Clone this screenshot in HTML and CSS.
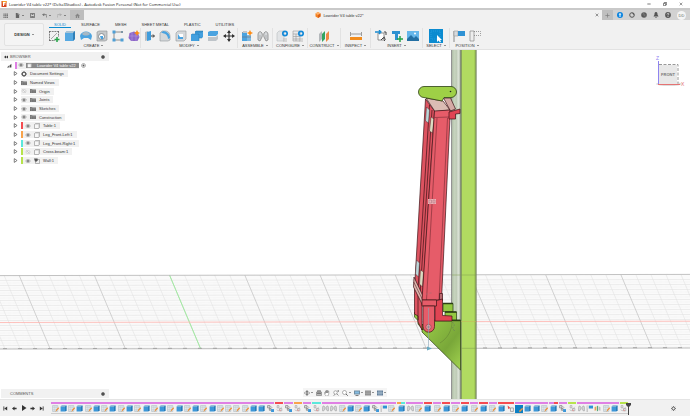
FILE: index.html
```html
<!DOCTYPE html>
<html lang="en">
  <head>
    <meta charset="utf-8">
    <meta name="viewport" content="width=device-width, initial-scale=1">
    <title>Lowrider V4 table v22* (Delta3Studios) - Autodesk Fusion Personal</title>
    <link rel="stylesheet" href="styles.css">
  </head>
  <body>
    <!-- icon sheet -->
    <svg class="sheet" aria-hidden="true">
      <symbol id="app" viewBox="0 0 12 12"><path d="M1 0h10v12H1z" fill="#d8431b"/><path d="M3 0h8v3L8 5H3z" fill="#f7a52b"/><path d="M4 2h5v2H6v1h3v2H6v3H4z" fill="#fff"/></symbol>
      <symbol id="apps" viewBox="0 0 12 12"><path d="M1 1h3v3H1zM5 1h3v3H5zM9 1h3v3H9zM1 5h3v3H1zM5 5h3v3H5zM9 5h3v3H9zM1 9h3v3H1zM5 9h3v3H5zM9 9h3v3H9z" fill="#777"/></symbol>
      <symbol id="file" viewBox="0 0 12 12"><path d="M2 0h5l3 3v9H2z" fill="#666"/><path d="M7 0v3h3" stroke="#ddd" fill="none"/></symbol>
      <symbol id="save" viewBox="0 0 12 12"><path d="M1 1h10v10H1z" fill="none" stroke="#666" stroke-width="2"/><path d="M4 1h4v4H4zM3 7h6v4H3z" fill="#777"/></symbol>
      <symbol id="undo" viewBox="0 0 12 12"><path d="M2 4h6a3 3 0 0 1 2 6M5 1L2 4l3 3" fill="none" stroke="#555" stroke-width="1.8"/></symbol>
      <symbol id="redo" viewBox="0 0 12 12"><path d="M10 4H4a3 3 0 0 0-2 6M7 1l3 3-3 3" fill="none" stroke="#999" stroke-width="1.5"/></symbol>
      <symbol id="home" viewBox="0 0 12 12"><path d="M6 1l6 6h-2v5H7V8H5v4H2V7H0z" fill="#858585"/></symbol>
      <symbol id="cube" viewBox="0 0 12 12"><path d="M6 0l5 3v6l-5 3-5-3V3z" fill="#f58220"/><path d="M6 0l5 3-5 3-5-3z" fill="#ffb168"/><path d="M6 6l5-3v6l-5 3z" fill="#d9601a"/></symbol>
      <symbol id="close" viewBox="0 0 12 12"><path d="M2 2l8 8M10 2l-8 8" stroke="#444" stroke-width="1.6"/></symbol>
      <symbol id="min" viewBox="0 0 12 12"><path d="M1 6h10" stroke="#222" stroke-width="1.8"/></symbol>
      <symbol id="restore" viewBox="0 0 12 12"><path d="M1.500 4h6.500v7H1.500zM4 4V1.500h7V8H8" fill="none" stroke="#222" stroke-width="1.6"/></symbol>
      <symbol id="plus" viewBox="0 0 12 12"><path d="M6 1v10M1 6h10" stroke="#777" stroke-width="1.5"/></symbol>
      <symbol id="ext-icon" viewBox="0 0 12 12"><circle cx="6" cy="6" r="6" fill="#0a84e0"/><path d="M6 2l3 3H7v5H5V5H3z" fill="#fff"/></symbol>
      <symbol id="jobs" viewBox="0 0 12 12"><circle cx="6" cy="6" r="4.600" fill="none" stroke="#555" stroke-width="2"/><path d="M6 3l4-1v4z" fill="#555"/></symbol>
      <symbol id="online" viewBox="0 0 12 12"><circle cx="6" cy="6" r="5.600" fill="#5a5a5a"/><path d="M3 4l6 5M4 2l5 4" stroke="#999"/></symbol>
      <symbol id="bell" viewBox="0 0 12 12"><path d="M6 0c3 0 3 3 3 5l2 4H1l2-4c0-2 0-5 3-5zM4 10h4l-2 2z" fill="#555"/></symbol>
      <symbol id="help" viewBox="0 0 12 12"><circle cx="6" cy="6" r="5.800" fill="#555"/><path d="M4 5c0-3 4-3 4-1 0 1.500-2 1.500-2 3M6 8v2" stroke="#fff" stroke-width="1.300" fill="none"/></symbol>

      <symbol id="sketch" viewBox="0 0 12 12"><path d="M1 1.500h10M1.500 1v10M1 10.500h6M10.500 1v6" fill="none" stroke="#666" stroke-width=".8" stroke-dasharray="2 .7"/><path d="M3 9l6-6" stroke="#888" stroke-width=".7"/><path d="M9 7v5M6.500 9.500h5" stroke="#25a347" stroke-width="1.500"/></symbol>
      <symbol id="extrude" viewBox="0 0 12 12"><path d="M1 3l2-2h8v8l-2 2H1z" fill="#56a9e2"/><path d="M1 3l2-2h8L9 3z" fill="#a9c4d6"/><path d="M9 3l2-2v8l-2 2z" fill="#2f7fb8"/></symbol>
      <symbol id="revolve" viewBox="0 0 12 12"><path d="M0 6c1-6 11-6 12 0l-1 4-3-2H4l-3 2z" fill="#4aa3e0"/><path d="M2 4c2-3 6-3 8 0-2 2-6 2-8 0z" fill="#a6b8c4"/></symbol>
      <symbol id="hole" viewBox="0 0 12 12"><path d="M1 2l2-1h8v9l-2 1H1z" fill="#c6c9cb" stroke="#8b8f92" stroke-width=".6"/><circle cx="5.500" cy="6.500" r="3" fill="#fff" stroke="#858b90"/><path d="M4 6h3v3H5z" fill="#4aa3e0"/></symbol>
      <symbol id="pattern" viewBox="0 0 12 12"><path d="M2 2h8M2 2v8h8" fill="none" stroke="#777" stroke-width=".8"/><path d="M.5.500h3v3h-3zM.5 8.500h3v3h-3zM8.500 8.500h3v3h-3z" fill="#4f9fd6"/><path d="M9 1h2v2H9z" fill="#7d96a5"/></symbol>
      <symbol id="form" viewBox="0 0 12 12"><path d="M6 1.500l4 1.500 1.500 4-2 4H3L.5 8l1-5z" fill="#8d67c8"/><path d="M1 6h10M4 2v9M8 3v8" stroke="#b498e0" stroke-width=".6"/><path d="M9 0l1 2 2 1-2 1-1 2-1-2-2-1 2-1z" fill="#ff8b13"/></symbol>
      <symbol id="presspull" viewBox="0 0 12 12"><path d="M2 2l3-1v9l-3 1z" fill="#b8bcc0"/><path d="M4 2l4-1v9l-4 1z" fill="#3f9cdc"/><path d="M8 6h3M10 4.500L11.500 6 10 7.500" stroke="#333" fill="none"/></symbol>
      <symbol id="fillet" viewBox="0 0 12 12"><path d="M1 3l2-2h3c4 0 5 3 5 6v3l-2 1H1z" fill="#d5d8da" stroke="#92979b" stroke-width=".6"/><path d="M4 1c4 0 7 3 7 7L9 9C9 5 6 3 2 3z" fill="#4aa3e0"/></symbol>
      <symbol id="shell" viewBox="0 0 12 12"><path d="M1 3l2-2h8v8l-2 2H1z" fill="#d5d8da" stroke="#92979b" stroke-width=".6"/><path d="M3 4h5v5H3z" fill="#fff"/><path d="M3 4l2 3h3v2H3z" fill="#4aa3e0"/></symbol>
      <symbol id="combine" viewBox="0 0 12 12"><path d="M4 2l1-1h7v6l-1 1H8v3H0V5l1-1h3z" fill="#43a0df"/><path d="M4 2l1-1h7l-1 1zM0 5l1-1h7v4h3M8 8v3" fill="none" stroke="#2375aa" stroke-width=".5"/></symbol>
      <symbol id="split" viewBox="0 0 12 12"><path d="M1 2l2-1h8v3L9 6H1z" fill="#4aa3e0"/><path d="M1 7h8l2-2v4l-2 2H1z" fill="#bec4c9"/></symbol>
      <symbol id="move" viewBox="0 0 12 12"><path d="M6 1v10M1 6h10" stroke="#333" stroke-width="1.200"/><path d="M6 0l2 3H4zM6 12l2-3H4zM0 6l3-2v4zM12 6L9 4v4z" fill="#333"/></symbol>
      <symbol id="component" viewBox="0 0 12 12"><path d="M1 3h5v8H1z" fill="#4aa3e0"/><path d="M6 5h4v6H6z" fill="#7db8e0"/><path d="M1 7h9M1 3l1-1h4" stroke="#678" stroke-width=".7" fill="none"/><path d="M9 0l1 2 2 1-2 1-1 2-1-2-2-1 2-1z" fill="#ff8b13"/></symbol>
      <symbol id="joint" viewBox="0 0 12 12"><path d="M1 10V5c0-3 2-4 3-3 1.500 1 1.500 3 1 5l-2 4zM7 7c-.5-2-.5-4 1-5 1-1 3 0 3 3v5l-2 1z" fill="#d5d8da" stroke="#777" stroke-width=".7"/><path d="M3 5v4M9 5v4" stroke="#999" stroke-width=".6"/></symbol>
      <symbol id="config" viewBox="0 0 12 12"><path d="M1 3l2-2h5v10H1z" fill="#e2e4e6" stroke="#b9bdc0" stroke-width=".6"/><circle cx="9" cy="3.500" r="2.200" fill="none" stroke="#1489d8" stroke-width="1.700"/><path d="M7 9h4M7 11h4" stroke="#bbb"/></symbol>
      <symbol id="table" viewBox="0 0 12 12"><path d="M1 1h7v10H1zM1 4h7M1 6.500h7M1 9h7M4 4v7" fill="#e9eaeb" stroke="#999" stroke-width=".6"/><circle cx="9" cy="3.500" r="2.200" fill="none" stroke="#1489d8" stroke-width="1.700"/><path d="M7 9h4M7 11h4" stroke="#bbb"/></symbol>
      <symbol id="plane" viewBox="0 0 12 12"><path d="M1 4l3-3v8l-3 3z" fill="#b4b8bb"/><path d="M4 4l3-3v8l-3 3z" fill="#32a562"/><path d="M8 4l3-3v8l-3 3z" fill="#ef8a45"/></symbol>
      <symbol id="measure" viewBox="0 0 12 12"><path d="M.5 2v4M11.500 2v4M1 4h10" stroke="#777" stroke-width=".7"/><path d="M0 7h12v3H0z" fill="#f28c1d"/></symbol>
      <symbol id="derive" viewBox="0 0 12 12"><path d="M3 3h6v7H3z" fill="#fff" stroke="#777" stroke-width=".8"/><path d="M0 2h5M4 0l2 2-2 2" stroke="#188ad0" stroke-width="1.300" fill="none"/><path d="M9 2h2v3M6 10l2-2a1.500 1.500 0 0 1 2 2l-1 1M8 8l2-1" stroke="#444" fill="none"/></symbol>
      <symbol id="mcmaster" viewBox="0 0 12 12"><path d="M1 1h8v3H7v6H4V4H1z" fill="#2e91d1"/><path d="M9 6v6M6 9h6" stroke="#25a347" stroke-width="1.500"/></symbol>
      <symbol id="picture" viewBox="0 0 12 12"><path d="M0 1h12v10H0z" fill="#65b6ea"/><circle cx="8" cy="3.500" r="1" fill="#fff"/><path d="M0 9l4-4 3 3 2-2 3 3v2H0z" fill="#236fa3"/></symbol>
      <symbol id="select" viewBox="0 0 14 14"><path d="M0 0h14v14H0z" fill="#0b8bd0"/><path d="M2 2h9v8H2z" fill="none" stroke="#38a9e5" stroke-width=".6" stroke-dasharray="1 1"/><path d="M8 6v7l1.500-1.500L11 13.500l1-1L11 11h2z" fill="#fff"/></symbol>
      <symbol id="capture" viewBox="0 0 12 12"><path d="M1 1v11" stroke="#888"/><path d="M1 1h4v5H1z" fill="#d7dadd" stroke="#999" stroke-width=".6"/><path d="M5 1h7v5H5z" fill="#2f92d4"/></symbol>
      <symbol id="revert" viewBox="0 0 12 12"><path d="M1 1h4v10H1z" fill="#eee" stroke="#888" stroke-width=".7"/><path d="M5 1.500h6.500v4H5" fill="none" stroke="#777" stroke-width=".7" stroke-dasharray="1 1"/></symbol>

      <symbol id="tri" viewBox="0 0 8 8"><path d="M2 1v6l4-2.500V3.500z" fill="#fff" stroke="#555" stroke-width="1.200"/></symbol>
      <symbol id="root" viewBox="0 0 8 8"><path d="M0 7l3-3v3zM4 4l3-3v6H4z" fill="#444"/></symbol>
      <symbol id="eye" viewBox="0 0 12 8"><path d="M1 4c3-4 7-4 10 0-3 4-7 4-10 0z" fill="#e2e2e2" stroke="#777"/><circle cx="6" cy="4" r="1.900" fill="#666"/></symbol>
      <symbol id="eye-off" viewBox="0 0 12 8"><path d="M1 4c3-4 7-4 10 0-3 4-7 4-10 0z" fill="none" stroke="#bbb"/><path d="M3 1l6 6" stroke="#aaa"/></symbol>
      <symbol id="folder" viewBox="0 0 12 10"><path d="M0 1h4l1 1h7v7H0z" fill="#777"/><path d="M0 3.500h12M3 1v8M8 2v7" stroke="#a5a5a5" stroke-width=".6"/></symbol>
      <symbol id="gear" viewBox="0 0 12 12"><circle cx="6" cy="6" r="3.500" fill="none" stroke="#555" stroke-width="2.200"/><path d="M6 0v2M6 10v2M0 6h2M10 6h2M2 2l1 1M9 9l1 1M10 2L9 3M2 10l1-1" stroke="#555" stroke-width="1.800"/></symbol>
      <symbol id="body" viewBox="0 0 12 12"><path d="M1 3l2-2h8v8l-2 2H1z" fill="#f7f7f7" stroke="#777"/><path d="M1 3h8v8M9 3l2-2" stroke="#aaa" fill="none" stroke-width=".7"/></symbol>
      <symbol id="linked" viewBox="0 0 12 12"><path d="M3 3h8v8H3z" fill="#eee" stroke="#777"/><path d="M0 1h6v6H2z" fill="#555"/><path d="M7 1v5" stroke="#333"/></symbol>
      <symbol id="dot" viewBox="0 0 8 8"><circle cx="4" cy="4" r="3.500" fill="#333"/><path d="M4 2v4" stroke="#aaa"/></symbol>
      <symbol id="radio" viewBox="0 0 10 10"><circle cx="5" cy="5" r="4" fill="#fff" stroke="#666"/><circle cx="5" cy="5" r="2" fill="#555"/></symbol>
      <symbol id="rewind" viewBox="0 0 8 8"><path d="M0 4l4-3v6zM4 4l4-3v6z" fill="#333"/></symbol>

      <symbol id="orbit" viewBox="0 0 12 12"><path d="M6 0l2 3H7v6h1l-2 3-2-3h1V3H4z" fill="#555"/><ellipse cx="6" cy="6" rx="5.500" ry="2.500" fill="none" stroke="#666"/></symbol>
      <symbol id="look" viewBox="0 0 12 12"><path d="M1 4h10v7H1zM3 1h6v3H3z" fill="#bbb" stroke="#666"/><path d="M3 7h2M7 7h2" stroke="#333" stroke-width="2"/></symbol>
      <symbol id="pan" viewBox="0 0 12 12"><path d="M3 11L0 6l2-1 1 2V2h1.500v4V1H6v5-5h1.500v5L8 2h1.500v6L8 12H4z" fill="#fff" stroke="#666" stroke-width=".9"/></symbol>
      <symbol id="zoom" viewBox="0 0 12 12"><circle cx="5" cy="5" r="3.500" fill="#fff" stroke="#666"/><path d="M7.500 7.500L11 11M1 11l3-2M9 2h3M10.500.500v3" stroke="#555" stroke-width="1.200"/></symbol>
      <symbol id="fit" viewBox="0 0 12 12"><circle cx="5" cy="5" r="4" fill="#fff" stroke="#666"/><path d="M8 8l3.500 3.500" stroke="#555" stroke-width="1.800"/></symbol>
      <symbol id="display" viewBox="0 0 12 12"><path d="M0 1h12v8H0z" fill="#718da1"/><path d="M2 3h8v4H2z" fill="#85bce2"/><path d="M3 11h6" stroke="#555" stroke-width="1.500"/></symbol>
      <symbol id="grid" viewBox="0 0 12 12"><path d="M0 1h12v10H0z" fill="#8c8c8c"/><path d="M0 4h12M0 7h12M4 1v10M8 1v10" stroke="#bbb" stroke-width=".7"/></symbol>
      <symbol id="views" viewBox="0 0 12 12"><path d="M0 1h12v10H0z" fill="#627d98"/><path d="M0 6h12M4 1v10M8 1v10" stroke="#d1e4f3"/></symbol>

      <symbol id="first" viewBox="0 0 12 12"><path d="M2 1v10" stroke="#333" stroke-width="2"/><path d="M3 6l7-5v10z" fill="#333"/></symbol>
      <symbol id="back" viewBox="0 0 12 12"><path d="M0 6l6-5v3h5v4H6v3z" fill="#333"/></symbol>
      <symbol id="play" viewBox="0 0 12 12"><path d="M2 0l9 6-9 6z" fill="#333"/></symbol>

      <symbol id="t-s" viewBox="0 0 12 12"><path d="M1 1h9v10H1z" fill="#e6ecef" stroke="#9aabb5" stroke-width=".8"/><path d="M1 4h9M4 1v10M7 1v10M1 8h9" stroke="#aebdc6" stroke-width=".6"/><path d="M6 12l1-4 4-4 1 2-4 4z" fill="#f08c2e"/></symbol>
      <symbol id="t-x" viewBox="0 0 12 12"><path d="M0 0h12v12H0z" fill="#0b7fc4"/><path d="M6 11l1-3 4-4 1 2-4 4z" fill="#ef9a45"/></symbol>
      <symbol id="t-e" viewBox="0 0 12 12"><path d="M1 3l2-2h8v8l-2 2H1z" fill="#3d97d8"/><path d="M1 3l2-2h8L9 3z" fill="#95b9d1"/><path d="M9 3l2-2v8l-2 2z" fill="#2372ac"/></symbol>
      <symbol id="t-j" viewBox="0 0 12 12"><path d="M1 1h4v4H1zM4 6h3v3H4z" fill="#e5e5e5" stroke="#666"/><path d="M7 7h5v5H7z" fill="#3d97d8"/><path d="M6 2l3 3" stroke="#777"/></symbol>
      <symbol id="t-l" viewBox="0 0 12 12"><path d="M2 1h3v4H2zM6 6h4v4H6z" fill="#eee" stroke="#999"/><path d="M1 8l3 2 6-7" fill="none" stroke="#aaa"/><circle cx="7" cy="9" r="1.500" fill="#df9c9c"/></symbol>
      <symbol id="t-a" viewBox="0 0 12 12"><path d="M1 10V4c0-3 3-3 4 0v3l-2 3zM7 7V4c1-3 4-3 4 0v6H9z" fill="#d5d8da" stroke="#888" stroke-width=".8"/></symbol>
      <symbol id="t-p" viewBox="0 0 12 12"><path d="M2 1v11" stroke="#888"/><path d="M2 1h3v5H2z" fill="#ddd"/><path d="M5 1h7v5H5z" fill="#2f92d4"/></symbol>
      <symbol id="t-m" viewBox="0 0 12 12"><path d="M1 4l3-2v7l-3 1z" fill="#e8a25a"/><path d="M5 2l2-1v9l-2 1z" fill="#54a877"/><path d="M8 2l3 2v6L8 9z" fill="#bbb"/></symbol>
      <symbol id="t-r" viewBox="0 0 12 12"><path d="M1 1l5 4-4 2z" fill="#e84646"/><path d="M6 5h5v6H6z" fill="#eee" stroke="#777"/></symbol>
    </svg>

    <div class="app">
      <header class="titlebar">
        <svg class="ico6"><use href="#app"/></svg>
        <span class="app-title grow">Lowrider V4 table v22* (Delta3Studios) - Autodesk Fusion Personal (Not for Commercial Use)</span>
        <div class="window-controls">
          <button aria-label="Minimize"><svg class="ico4"><use href="#min"/></svg></button>
          <button aria-label="Restore"><svg class="ico4"><use href="#restore"/></svg></button>
          <button aria-label="Close"><svg class="ico4"><use href="#close"/></svg></button>
        </div>
      </header>

      <div class="tabbar">
        <div class="quick">
          <button aria-label="Data panel"><svg class="ico5"><use href="#apps"/></svg></button>
          <button class="caret" aria-label="File"><svg class="ico5"><use href="#file"/></svg></button>
          <button aria-label="Save"><svg class="ico5"><use href="#save"/></svg></button>
          <button class="caret" aria-label="Undo"><svg class="ico5"><use href="#undo"/></svg></button>
          <button class="caret" aria-label="Redo"><svg class="ico5"><use href="#redo"/></svg></button>
        </div>
        <button class="home" aria-label="Home"><svg class="ico5"><use href="#home"/></svg></button>
        <div class="document">
          <span class="document-name"><svg class="ico6"><use href="#cube"/></svg>Lowrider V4 table v22*</span>
          <button aria-label="Close document"><svg class="ico4"><use href="#close"/></svg></button>
        </div>
        <button class="new-tab" aria-label="New design"><svg class="ico5"><use href="#plus"/></svg></button>
        <div class="account">
          <button aria-label="Extensions"><svg class="ico6"><use href="#ext-icon"/></svg></button>
          <button aria-label="Job status"><svg class="ico6"><use href="#jobs"/></svg></button>
          <button aria-label="Online"><svg class="ico6"><use href="#online"/></svg></button>
          <button aria-label="Notifications"><svg class="ico6"><use href="#bell"/></svg></button>
          <button aria-label="Help"><svg class="ico6"><use href="#help"/></svg></button>
          <button class="avatar">DD</button>
        </div>
      </div>

      <div class="ribbon">
        <button class="workspace caret">DESIGN</button>
        <div class="ribbon-main">
          <nav class="tabs">
            <button class="tab active">SOLID</button>
            <button class="tab">SURFACE</button>
            <button class="tab">MESH</button>
            <button class="tab">SHEET METAL</button>
            <button class="tab">PLASTIC</button>
            <button class="tab">UTILITIES</button>
          </nav>
          <div class="panels">
            <div class="panel">
              <div class="tools">
                <button aria-label="Create sketch"><svg><use href="#sketch"/></svg></button>
                <button aria-label="Extrude"><svg><use href="#extrude"/></svg></button>
                <button aria-label="Revolve"><svg><use href="#revolve"/></svg></button>
                <button aria-label="Hole"><svg><use href="#hole"/></svg></button>
                <button aria-label="Pattern"><svg><use href="#pattern"/></svg></button>
                <button aria-label="Create form"><svg><use href="#form"/></svg></button>
              </div>
              <button class="caret">CREATE</button>
            </div>
            <div class="panel">
              <div class="tools">
                <button aria-label="Press pull"><svg><use href="#presspull"/></svg></button>
                <button aria-label="Fillet"><svg><use href="#fillet"/></svg></button>
                <button aria-label="Shell"><svg><use href="#shell"/></svg></button>
                <button aria-label="Combine"><svg><use href="#combine"/></svg></button>
                <button aria-label="Split body"><svg><use href="#split"/></svg></button>
                <button aria-label="Move"><svg><use href="#move"/></svg></button>
              </div>
              <button class="caret">MODIFY</button>
            </div>
            <div class="panel">
              <div class="tools">
                <button aria-label="New component"><svg><use href="#component"/></svg></button>
                <button aria-label="Joint"><svg><use href="#joint"/></svg></button>
              </div>
              <button class="caret">ASSEMBLE</button>
            </div>
            <div class="panel">
              <div class="tools">
                <button aria-label="Configure"><svg><use href="#config"/></svg></button>
                <button aria-label="Configuration table"><svg><use href="#table"/></svg></button>
              </div>
              <button class="caret">CONFIGURE</button>
            </div>
            <div class="panel">
              <div class="tools"><button aria-label="Offset plane"><svg><use href="#plane"/></svg></button></div>
              <button class="caret">CONSTRUCT</button>
            </div>
            <div class="panel">
              <div class="tools"><button aria-label="Measure"><svg><use href="#measure"/></svg></button></div>
              <button class="caret">INSPECT</button>
            </div>
            <div class="panel">
              <div class="tools">
                <button aria-label="Derive"><svg><use href="#derive"/></svg></button>
                <button aria-label="Insert part"><svg><use href="#mcmaster"/></svg></button>
                <button aria-label="Canvas"><svg><use href="#picture"/></svg></button>
              </div>
              <button class="caret">INSERT</button>
            </div>
            <div class="panel">
              <div class="tools"><button aria-label="Select"><svg class="big"><use href="#select"/></svg></button></div>
              <button class="caret">SELECT</button>
            </div>
            <div class="panel">
              <div class="tools">
                <button aria-label="Capture position"><svg><use href="#capture"/></svg></button>
                <button aria-label="Revert position"><svg><use href="#revert"/></svg></button>
              </div>
              <button class="caret">POSITION</button>
            </div>
          </div>
        </div>
      </div>

      <main class="viewport">
        <svg class="scene" viewBox="0 50 690 349" preserveAspectRatio="xMidYMid slice">
          <defs>
            <linearGradient id="rail"><stop offset="0" stop-color="#aebba6"/><stop offset=".25" stop-color="#c6d4bd"/><stop offset=".5" stop-color="#c0ccb8"/><stop offset=".7" stop-color="#dce4d7"/><stop offset="1" stop-color="#a3ad9d"/></linearGradient>
            <linearGradient id="gusset" x1="0" y1="0" x2="1" y2="1"><stop offset="0" stop-color="#9bcd48"/><stop offset=".6" stop-color="#79a739"/><stop offset="1" stop-color="#a3d450"/></linearGradient>
          </defs>
          <path d="M0 275.500L690 274.500V348L0 349z" fill="#fafafa"/>
          <g id="floor"></g>

          <!-- wall -->
          <path d="M452 50h9v349h-9z" fill="url(#rail)"/>
          <path d="M451.500 50v349" stroke="#777" stroke-width=".8"/>
          <path d="M461 50h15v349h-15z" fill="#b1db61"/>
          <path d="M461 50v349" stroke="#6b7860" stroke-width="1.200"/>
          <path d="M474.500 50v349" stroke="#a4cc56" stroke-width="1"/>
          <path d="M476 50v349" stroke="#6f7f58" stroke-width="1.200"/>
          <path d="M452 275h24M452 348.300h24" stroke="#7d9a4c" stroke-width=".5"/>
          <path d="M461 321.500h15" stroke="#c9b25b" stroke-width=".5"/>

          <!-- wall bracket -->
          <g stroke="#2c3f14" stroke-width=".7">
            <path d="M443 303.500h10v8h-10zM445 312h11.500v8.500H445z" fill="#93c742"/>
            <path d="M443 303.500h10M445 312h11.500" stroke-width="1.500"/>
            <path d="M422 325l13-5h25.500v50L422 332z" fill="url(#gusset)"/>
            <path d="M435 320.500h25.500" stroke-width="1.400"/>
            <path d="M414.500 312l5 5v5l-5-5zM418 320l5 5v5l-5-6z" fill="#93c742"/>
          </g>
          <path d="M452 322c0 8-4 16-12 21" fill="none" stroke="#607f35" stroke-width=".5"/>
          <path d="M452.500 322l2 3-2 3 2 3" fill="none" stroke="#59626c" stroke-width=".6" stroke-dasharray="1 1"/>

          <!-- folded table -->
          <g stroke="#3c1116" stroke-width=".7" stroke-linejoin="round">
            <path d="M425.500 99l9 12L422 305v25l-4-8v-6l-3.500-2V289z" fill="#dd5360"/>
            <path d="M429.500 105L418 290v30M432 110l-12 185" fill="none"/>
            <path d="M426.500 107l3 3-1 13-3-2z" fill="#bcd8da" stroke-width=".4"/>
            <path d="M431 117l3 2-1.500 14-3-2z" fill="#dcdcc2" stroke-width=".4"/>
            <path d="M416.500 260l3 3-1 14-3-3z" fill="#bcd8da" stroke-width=".4"/>
            <path d="M420.500 270l3 2-1 15-3-3z" fill="#dcdcc2" stroke-width=".4"/>
            <path d="M414 277l8.500 18v10L413.500 287z" fill="#deb5ae"/>
            <path d="M413.700 282l8.500 17" fill="none" stroke-width=".5"/>
            <path d="M426 98l17 3 7 9-15 1.500z" fill="#dbbcb4"/>
            <path d="M443.500 98h7l5 11-5 2z" fill="#d5aaa5"/>
            <path d="M434.500 111l15.500-1v7.500L441.500 300H422z" fill="#e65c69"/>
            <path d="M434.500 117.500l15.500-.500M437 118l-10.500 182M447.500 118L439 300" fill="none" stroke-width=".4"/>
            <path d="M449 112l11-3v4.500l-4.500.500v5h-6.500z" fill="#e04453"/>
            <path d="M439.500 293.500h3v7h-3z" fill="#b96a70"/>
            <path d="M435 301l7.500-2v16.500l9.500.500v5h-17z" fill="#e04453"/>
            <path d="M422 300h14.500v6H422z" fill="#e65c69"/>
            <path d="M423 306h11.500v20.500a5.700 5.700 0 0 1-11.500 0z" fill="#e65c69"/>
            <circle cx="428.500" cy="327" r="2.700" fill="#e99ba2" stroke="#8c4a50"/>
          </g>
          <circle cx="428.500" cy="327" r="1" fill="#777"/>
          <path d="M426 294h2M429.500 293h2" stroke="#a96a72" stroke-width=".7"/>
          <path d="M428 199h8v5h-8z" fill="#efb0b5"/>
          <path d="M429 200h2.500v3H429zM433 200h2v3h-2z" fill="none" stroke="#9c7378" stroke-width=".5"/>
          <path d="M428.500 308v41" stroke="#8aa5b5" stroke-width=".6"/>
          <path d="M427 346.500l5 2-5 2z" fill="#69aac2"/>

          <!-- top clamp -->
          <path d="M424 86.500h27a5.500 5.500 0 0 1 0 11h-7l-2 3.500-18-3.500a5.500 5.500 0 0 1 0-11z" fill="#9ed046" stroke="#2c3f14" stroke-width=".8"/>
          <circle cx="450.500" cy="91.500" r=".8" fill="#222"/>
        </svg>

        <section class="browser">
          <h2 class="strip"><svg class="ico4"><use href="#rewind"/></svg><span class="grow">BROWSER</span><svg class="ico4"><use href="#dot"/></svg></h2>
          <ul class="tree">
            <li class="root"><svg class="ico5"><use href="#root"/></svg><span class="node"><i class="tag purple"></i><svg class="eye"><use href="#eye"/></svg><span class="current"><svg class="ico5"><use href="#body"/></svg>Lowrider V4 table v22</span></span><svg class="ico5"><use href="#radio"/></svg></li>
            <li><svg class="ico5"><use href="#tri"/></svg><span class="node"><svg class="ico6"><use href="#gear"/></svg>Document Settings</span></li>
            <li><svg class="ico5"><use href="#tri"/></svg><span class="node"><svg class="ico6"><use href="#folder"/></svg>Named Views</span></li>
            <li><svg class="ico5"><use href="#tri"/></svg><span class="node"><svg class="eye"><use href="#eye-off"/></svg><svg class="ico6"><use href="#folder"/></svg>Origin</span></li>
            <li><svg class="ico5"><use href="#tri"/></svg><span class="node"><svg class="eye"><use href="#eye"/></svg><svg class="ico6"><use href="#folder"/></svg>Joints</span></li>
            <li><svg class="ico5"><use href="#tri"/></svg><span class="node"><svg class="eye"><use href="#eye"/></svg><svg class="ico6"><use href="#folder"/></svg>Sketches</span></li>
            <li><svg class="ico5"><use href="#tri"/></svg><span class="node"><svg class="eye"><use href="#eye"/></svg><svg class="ico6"><use href="#folder"/></svg>Construction</span></li>
            <li><svg class="ico5"><use href="#tri"/></svg><span class="node"><i class="tag red"></i><svg class="eye"><use href="#eye"/></svg><svg class="ico6"><use href="#body"/></svg>Table:1</span></li>
            <li><svg class="ico5"><use href="#tri"/></svg><span class="node"><i class="tag orange"></i><svg class="eye"><use href="#eye"/></svg><svg class="ico6"><use href="#body"/></svg>Leg_Front-Left:1</span></li>
            <li><svg class="ico5"><use href="#tri"/></svg><span class="node"><i class="tag cyan"></i><svg class="eye"><use href="#eye"/></svg><svg class="ico6"><use href="#body"/></svg>Leg_Front-Right:1</span></li>
            <li><svg class="ico5"><use href="#tri"/></svg><span class="node"><i class="tag green"></i><svg class="eye"><use href="#eye-off"/></svg><svg class="ico6"><use href="#body"/></svg>Cross-beam:1</span></li>
            <li><svg class="ico5"><use href="#tri"/></svg><span class="node"><i class="tag green"></i><svg class="eye"><use href="#eye"/></svg><svg class="ico6"><use href="#linked"/></svg>Wall:1</span></li>
          </ul>
        </section>

        <svg class="viewcube" viewBox="0 0 34 36">
          <ellipse cx="15" cy="29" rx="13" ry="2" fill="#ddd"/>
          <path d="M5 10h18v19H5z" fill="#e8e8e8"/>
          <path d="M5 9.500h19v19" fill="none" stroke="#999" stroke-dasharray="3 1.500"/>
          <path d="M4.500 6v23" stroke="#8f84f0"/>
          <path d="M4 29.500h22" stroke="#e57373"/>
          <text x="2" y="5" class="axis-z">Z</text>
          <text x="27" y="31" class="axis-x">X</text>
          <text x="14" y="21" class="face">FRONT</text>
        </svg>

        <div class="navbar">
          <button class="caret" aria-label="Orbit"><svg class="ico6"><use href="#orbit"/></svg></button>
          <button aria-label="Look at"><svg class="ico6"><use href="#look"/></svg></button>
          <button aria-label="Pan"><svg class="ico6"><use href="#pan"/></svg></button>
          <button aria-label="Zoom"><svg class="ico6"><use href="#zoom"/></svg></button>
          <button class="caret" aria-label="Fit"><svg class="ico6"><use href="#fit"/></svg></button>
          <button class="caret" aria-label="Display settings"><svg class="ico6"><use href="#display"/></svg></button>
          <button class="caret" aria-label="Grid and snaps"><svg class="ico6"><use href="#grid"/></svg></button>
          <button class="caret" aria-label="Viewports"><svg class="ico6"><use href="#views"/></svg></button>
        </div>

        <h2 class="strip comments"><span class="grow">COMMENTS</span><svg class="ico4"><use href="#dot"/></svg></h2>
      </main>

      <footer class="timeline">
        <div class="playback">
          <button aria-label="Go to start"><svg class="ico5"><use href="#first"/></svg></button>
          <button aria-label="Step back"><svg class="ico5"><use href="#back"/></svg></button>
          <button aria-label="Play"><svg class="ico6"><use href="#play"/></svg></button>
          <button class="flip" aria-label="Step forward"><svg class="ico5"><use href="#back"/></svg></button>
          <button class="flip" aria-label="Go to end"><svg class="ico5"><use href="#first"/></svg></button>
        </div>
        <div class="track" id="track"></div>
        <svg class="marker" viewBox="0 0 5 12"><path d="M0 0h5v2L3 4v8H2V4L0 2z" fill="#444"/></svg>
        <button class="settings" aria-label="Timeline settings"><svg class="ico5"><use href="#gear"/></svg></button>
      </footer>
    </div>
    <script src="script.js"></script>
  </body>
</html>
```
FILE: styles.css
```css
* {
  box-sizing: border-box;
}

body {
  margin: 0;
  font-family: "Liberation Sans", Arial, sans-serif;
  font-size: 4px;
  line-height: 5px;
  color: #333;
  background: #fff;
}

button {
  display: flex;
  align-items: center;
  justify-content: center;
  padding: 0;
  border: 0;
  background: none;
  font: inherit;
  color: inherit;
  white-space: nowrap;
}

svg {
  display: block;
  flex: none;
}

.sheet {
  position: absolute;
  width: 0;
  height: 0;
}

.app {
  display: flex;
  flex-direction: column;
  height: 100vh;
}

.grow {
  flex: 1;
}

.ico4 { width: 4px; height: 4px; }
.ico5 { width: 5px; height: 5px; }
.ico6 { width: 6px; height: 6px; }

.caret::after {
  content: "";
  margin-left: 2px;
  border: 1px solid transparent;
  border-top-color: #333;
  border-bottom: 0;
}

/* title bar */
.titlebar {
  display: flex;
  align-items: center;
  gap: 2px;
  height: 8px;
  padding: 0 7px 0 1px;
  color: #111;
}

.app-title {
  font-family: "Open Sans", "Noto Sans", sans-serif;
}

.window-controls {
  display: flex;
  gap: 12px;
}

/* document tabs */
.tabbar {
  display: flex;
  height: 12px;
  border-top: 2px solid #c9c9c9;
  background: #d2d2d2;
}

.quick {
  display: flex;
  align-items: center;
  justify-content: space-between;
  width: 70px;
  padding: 0 4px 0 3px;
}

.home {
  width: 14px;
  background: #bdbdbd;
}

.document {
  display: flex;
  flex: 1;
  align-items: center;
  padding-right: 3px;
  background: #f1f1f1;
}

.document-name {
  display: flex;
  flex: 1;
  align-items: center;
  justify-content: center;
  gap: 2px;
}

.new-tab {
  width: 11px;
  background: #bfbfbf;
}

.account {
  display: flex;
  align-items: center;
  justify-content: space-between;
  width: 77px;
  padding: 0 4px;
}

.avatar {
  width: 9px;
  height: 9px;
  border-radius: 50%;
  background: #f5f5f5;
  color: #666;
}

/* ribbon */
.ribbon {
  display: flex;
  height: 30px;
  background: #f1f1f1;
  border-bottom: 1px solid #e2e2e2;
}

.workspace {
  width: 40px;
  height: 23px;
  margin: 3px 3px 0 4px;
  border: 1px solid #e2e2e2;
  border-radius: 2px;
  background: #f4f4f4;
  font-weight: bold;
}

.ribbon-main {
  flex: 1;
}

.tabs {
  display: flex;
  gap: 5px;
  height: 8px;
  padding-left: 2px;
}

.tab {
  padding: 1px 5px 0;
  border-bottom: 1px solid transparent;
}

.tab.active {
  color: #0b8bd0;
  border-bottom-color: #0b8bd0;
}

.panels {
  display: grid;
  grid-template-columns: 94px 97px 35px 35px 33px 30px 52px 27px 34px;
}

.panel {
  display: flex;
  flex-direction: column;
  align-items: center;
  border-right: 1px solid #e2e2e2;
}

.panel:last-child {
  border-right: 0;
}

.tools {
  display: flex;
  align-items: center;
  justify-content: center;
  gap: 4px;
  height: 15px;
}

.tools svg {
  width: 12px;
  height: 12px;
}

.tools svg.big {
  width: 14px;
  height: 14px;
}

/* viewport */
.viewport {
  position: relative;
  flex: 1;
  min-height: 0;
  overflow: hidden;
}

.scene {
  width: 100%;
  height: 100%;
}

.browser {
  position: absolute;
  top: 2px;
  left: 1px;
  width: 108px;
}

.strip {
  display: flex;
  align-items: center;
  gap: 2px;
  height: 9px;
  margin: 0;
  padding: 0 4px 0 3px;
  background: #f1f1f1;
  font-size: 4px;
  font-weight: normal;
  color: #555;
}

.comments {
  position: absolute;
  bottom: 1px;
  left: 1px;
  width: 108px;
  padding-left: 9px;
}

.tree {
  display: grid;
  grid-auto-rows: 1fr;
  height: 104px;
  margin: 0;
  padding: 0 0 0 12px;
  list-style: none;
}

.tree li {
  display: flex;
  align-items: center;
  gap: 2px;
}

.tree .root {
  margin-left: -6px;
}

.root .node {
  gap: 2px;
}

.node {
  display: flex;
  align-items: center;
  gap: 3px;
  height: 7px;
  margin-left: 1px;
  padding-right: 4px;
  background: #f1f1f1;
}

.root .node {
  padding-right: 0;
}

.current {
  display: flex;
  align-items: center;
  gap: 5px;
  padding: 0 3px 0 1px;
  background: #8b8b8b;
  color: #fff;
}

.eye {
  width: 6px;
  height: 4px;
}

.tag {
  width: 2px;
  height: 7px;
  margin-right: -1px;
}

.purple { background: #df80e4; }
.red { background: #f54b50; }
.orange { background: #f9a34a; }
.cyan { background: #5be8dc; }
.green { background: #b7e34c; }
.orange-cyan { background: linear-gradient(90deg, #f9a34a 50%, #5be8dc 50%); }
.purple-red { background: linear-gradient(90deg, #df80e4 50%, #f54b50 50%); }

.viewcube {
  position: absolute;
  top: 5px;
  right: 2px;
  width: 34px;
  height: 36px;
}

.axis-z {
  font-size: 5px;
  fill: #8f84f0;
}

.axis-x {
  font-size: 5px;
  fill: #e57373;
}

.face {
  font-size: 4px;
  font-weight: bold;
  text-anchor: middle;
  fill: #777;
}

.navbar {
  position: absolute;
  bottom: 2px;
  left: 50%;
  display: flex;
  align-items: center;
  justify-content: space-between;
  width: 84px;
  height: 9px;
  padding: 0 1px;
  background: #f5f5f5;
  transform: translateX(-50%);
}

.navbar .caret::after {
  margin-left: 1px;
}

/* timeline */
.timeline {
  display: flex;
  height: 17px;
  border-top: 1px solid #e4e4e4;
  background: #f1f1f1;
}

.playback {
  display: flex;
  align-items: center;
  justify-content: space-between;
  width: 51px;
  padding: 0 7px 0 3px;
}

.flip {
  transform: scaleX(-1);
}

.track {
  display: flex;
  flex: 1;
  margin: 2px 0;
  border-bottom: 1px solid #ccc;
}

.feature {
  display: flex;
  flex: 1 1 0;
  flex-direction: column;
  align-items: center;
  justify-content: flex-start;
  gap: 1px;
  min-width: 0;
}

.feature i {
  width: 100%;
  height: 2px;
}

.feature.change {
  border-left: 1px solid #f1f1f1;
}

.feature svg {
  width: 7px;
  height: 7px;
}

.feature.selected svg {
  width: 8px;
  height: 8px;
}

.marker {
  width: 5px;
  height: 12px;
  margin: 3px 0 0 -2px;
}

.settings {
  width: 59px;
  padding-left: 26px;
}
```
FILE: script.js
```js
const SVG = 'http://www.w3.org/2000/svg';

// s sketch, e extrude, j joint, l linked, a as-built, p position, m mirror, r rigid, x selected sketch
const features = 'sesesesesesesesesesesss' + 'seejljljlaasesejpseasese' + 'seseserxeesejlapmsel';

// bar colours for everything that is not purple
const colors = {
  27: 'red', 29: 'orange', 31: 'cyan', 41: 'orange-cyan', 44: 'red', 46: 'red',
  48: 'red', 50: 'red', 52: 'red', 53: 'red', 58: 'purple-red', 60: 'green', 66: 'green'
};

function line(parent, x1, y1, x2, y2, stroke, width) {
  const el = document.createElementNS(SVG, 'line');
  const attrs = {x1, y1, x2, y2, stroke, 'stroke-width': width};
  for (const key in attrs) {
    el.setAttribute(key, attrs[key]);
  }
  parent.appendChild(el);
  return el;
}

function drawFloor() {
  const floor = document.getElementById('floor');
  for (let y = 280; y < 348; y += 5) {
    line(floor, 0, y + 0.5, 690, y - 0.5, '#e8e8e8', 0.8);
    line(floor, 0, y + 3, 690, y + 2, '#f3f3f3', 0.6);
  }
  for (let i = -13; i < 36; i++) {
    const x = 169.5 + i * 15.05;
    const major = i % 5 == 0;
    line(floor, x, 275, x + 31, 348.5, major ? '#c6c6c6' : '#e3e3e3', major ? 0.8 : 0.6);
  }
  line(floor, 169.5, 275, 200.5, 348.5, '#9df09d', 0.9);
  line(floor, 0, 322.5, 690, 321.2, '#ffb3ad', 0.8);
  line(floor, 0, 275.6, 690, 274.4, '#bbb', 0.9);
  line(floor, 0, 349, 690, 348, '#aaa', 0.8);
  line(floor, 3, 348.6, 690, 347.6, '#999', 0.8).setAttribute('stroke-dasharray', '4 11');
}

function drawTimeline() {
  const track = document.getElementById('track');
  let last = 'purple';
  [...features].forEach((type, i) => {
    const color = colors[i] || 'purple';
    const button = document.createElement('button');
    button.className = 'feature';
    if (color != last) {
      button.classList.add('change');
    }
    if (type == 'x') {
      button.classList.add('selected');
    }
    button.innerHTML = `<i class="${color}"></i><svg><use href="#t-${type}"/></svg>`;
    track.appendChild(button);
    last = color;
  });
}

drawFloor();
drawTimeline();
```
